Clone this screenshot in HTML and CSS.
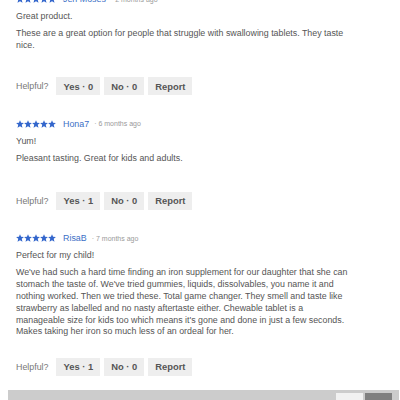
FILE: index.html
```html
<!DOCTYPE html>
<html>
<head>
<meta charset="utf-8">
<link rel="stylesheet" href="styles.css">
</head>
<body>
<div class="page">
  <div class="reviews">
    <div class="review">
      <div class="head">
        <span class="stars"><svg viewBox="0 0 50 10" width="40" height="8"><g fill="#3366cc"><path id="s" d="M5 0.2l1.35 3.3 3.55 0.25-2.75 2.25 0.95 3.6L5 7.7 1.9 9.6l0.95-3.6L0.1 3.75l3.55-0.25z"/><use href="#s" x="10"/><use href="#s" x="20"/><use href="#s" x="30"/><use href="#s" x="40"/></g></svg></span>
        <span class="name">Jen Moses</span>
        <span class="date">· 2 months ago</span>
      </div>
      <div class="title">Great product.</div>
      <div class="body">These are a great option for people that struggle with swallowing tablets. They taste nice.</div>
      <div class="helpful">
        <span class="label">Helpful?</span>
        <span class="btn">Yes · 0</span>
        <span class="btn">No · 0</span>
        <span class="btn">Report</span>
      </div>
    </div>
    <div class="review short">
      <div class="head">
        <span class="stars"><svg viewBox="0 0 50 10" width="40" height="8"><g fill="#3366cc"><use href="#s"/><use href="#s" x="10"/><use href="#s" x="20"/><use href="#s" x="30"/><use href="#s" x="40"/></g></svg></span>
        <span class="name">Hona7</span>
        <span class="date">· 6 months ago</span>
      </div>
      <div class="title">Yum!</div>
      <div class="body">Pleasant tasting. Great for kids and adults.</div>
      <div class="helpful">
        <span class="label">Helpful?</span>
        <span class="btn">Yes · 1</span>
        <span class="btn">No · 0</span>
        <span class="btn">Report</span>
      </div>
    </div>
    <div class="review long">
      <div class="head">
        <span class="stars"><svg viewBox="0 0 50 10" width="40" height="8"><g fill="#3366cc"><use href="#s"/><use href="#s" x="10"/><use href="#s" x="20"/><use href="#s" x="30"/><use href="#s" x="40"/></g></svg></span>
        <span class="name">RisaB</span>
        <span class="date">· 7 months ago</span>
      </div>
      <div class="title">Perfect for my child!</div>
      <div class="body">We've had such a hard time finding an iron supplement for our daughter that she can stomach the taste of. We've tried gummies, liquids, dissolvables, you name it and nothing worked. Then we tried these. Total game changer. They smell and taste like strawberry as labelled and no nasty aftertaste either. Chewable tablet is a manageable size for kids too which means it's gone and done in just a few seconds. Makes taking her iron so much less of an ordeal for her.</div>
      <div class="helpful">
        <span class="label">Helpful?</span>
        <span class="btn">Yes · 1</span>
        <span class="btn">No · 0</span>
        <span class="btn">Report</span>
      </div>
    </div>
  </div>
  <div class="pager">
    <span class="pg light"></span>
    <span class="pg dark"></span>
  </div>
</div>
</body>
</html>
```

FILE: styles.css
```css
html, body {
  margin: 0;
  padding: 0;
  background: #ffffff;
  overflow: hidden;
}
body {
  font-family: "Liberation Sans", Arial, sans-serif;
  color: #555555;
  font-size: 8.85px;
}
.page {
  width: 400px;
  height: 400px;
  overflow: hidden;
}
.reviews {
  margin-top: -7px;
  margin-left: 16px;
  width: 333px;
}
.review {
  margin-bottom: 22.5px;
}
.review.long {
  margin-bottom: 14px;
}
.head {
  display: flex;
  align-items: center;
  height: 12px;
}
.stars {
  display: flex;
  width: 40px;
  height: 8px;
}
.stars svg {
  display: block;
}
.name {
  margin-left: 7px;
  color: #3c6fc6;
  font-size: 8.9px;
}
.date {
  margin-left: 5px;
  color: #9a9a9a;
  font-size: 7px;
}
.title {
  margin-top: 5px;
  line-height: 12px;
}
.body {
  margin-top: 6px;
  line-height: 11.8px;
}
.helpful {
  margin-top: 25.5px;
  display: flex;
  align-items: center;
  gap: 4px;
  height: 18px;
}
.review.short .helpful {
  margin-top: 27.5px;
}
.review.long .helpful {
  margin-top: 19.5px;
}
.label {
  margin-right: 4px;
  color: #777777;
}
.btn {
  display: flex;
  align-items: center;
  height: 18px;
  padding: 0 7px;
  background: #eeeeee;
  color: #555555;
  font-weight: bold;
  font-size: 9.4px;
}
.pager {
  margin-left: 8px;
  width: 391px;
  height: 20px;
  background: #cccccc;
  display: flex;
  justify-content: flex-end;
  padding-top: 3px;
  box-sizing: border-box;
  gap: 2px;
  padding-right: 7px;
}
.pg {
  width: 27px;
  height: 20px;
}
.pg.light {
  background: #f1f1f1;
}
.pg.dark {
  background: #808080;
}
```
